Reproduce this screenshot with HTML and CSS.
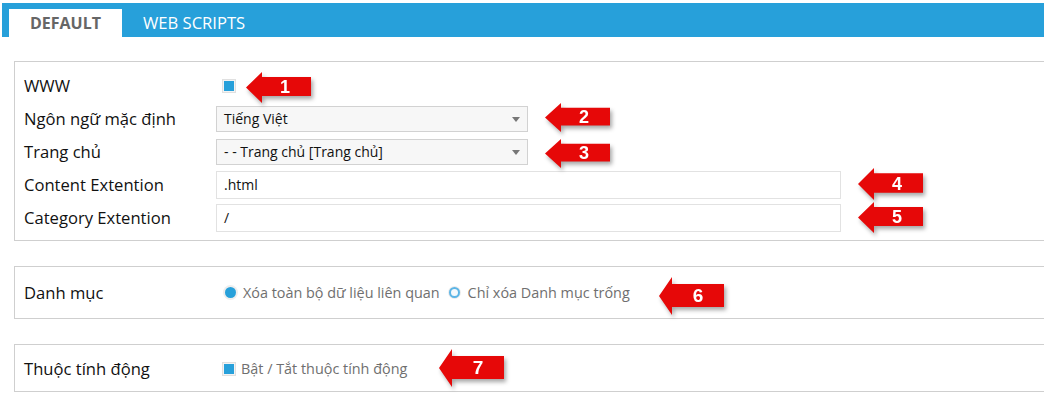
FILE: index.html
```html
<!DOCTYPE html>
<html lang="vi">
<head>
<meta charset="utf-8">
<link rel="stylesheet" href="styles.css">
</head>
<body>
<div class="page">
  <div class="tabbar">
    <div class="tab active">DEFAULT</div>
    <div class="tab">WEB SCRIPTS</div>
  </div>

  <div class="panel p1">
    <div class="row">
      <div class="label">WWW</div>
      <div class="ctrl"><span class="check"><span class="mark"></span></span></div>
    </div>
    <div class="row">
      <div class="label">Ngôn ngữ mặc định</div>
      <div class="ctrl"><div class="select">Tiếng Việt<span class="caret"></span></div></div>
    </div>
    <div class="row">
      <div class="label">Trang chủ</div>
      <div class="ctrl"><div class="select">- - Trang chủ [Trang chủ]<span class="caret"></span></div></div>
    </div>
    <div class="row">
      <div class="label">Content Extention</div>
      <div class="ctrl"><div class="input">.html</div></div>
    </div>
    <div class="row">
      <div class="label">Category Extention</div>
      <div class="ctrl"><div class="input">/</div></div>
    </div>
  </div>

  <div class="panel p2">
    <div class="row">
      <div class="label">Danh mục</div>
      <div class="ctrl opts">
        <span class="radio on"></span><span class="opt">Xóa toàn bộ dữ liệu liên quan</span>
        <span class="radio"></span><span class="opt">Chỉ xóa Danh mục trống</span>
      </div>
    </div>
  </div>

  <div class="panel p3">
    <div class="row">
      <div class="label">Thuộc tính động</div>
      <div class="ctrl opts">
        <span class="check"><span class="mark"></span></span><span class="opt">Bật / Tắt thuộc tính động</span>
      </div>
    </div>
  </div>

  <div class="arrow a1"><svg viewBox="0 0 65 31" preserveAspectRatio="none"><polygon points="0,15.5 16,0 16,5 65,5 65,24 16,24 16,31"/></svg><span>1</span></div>
  <div class="arrow a2"><svg viewBox="0 0 65 31" preserveAspectRatio="none"><polygon points="0,15.5 16,0 16,5 65,5 65,24 16,24 16,31"/></svg><span>2</span></div>
  <div class="arrow a3"><svg viewBox="0 0 65 31" preserveAspectRatio="none"><polygon points="0,15.5 16,0 16,5 65,5 65,24 16,24 16,31"/></svg><span>3</span></div>
  <div class="arrow a4"><svg viewBox="0 0 65 31" preserveAspectRatio="none"><polygon points="0,15.5 16,0 16,5 65,5 65,24 16,24 16,31"/></svg><span>4</span></div>
  <div class="arrow a5"><svg viewBox="0 0 65 31" preserveAspectRatio="none"><polygon points="0,15.5 16,0 16,5 65,5 65,24 16,24 16,31"/></svg><span>5</span></div>
  <div class="arrow a6 big"><svg viewBox="0 0 65 38" preserveAspectRatio="none"><polygon points="0,19 13,0 13,7 65,7 65,30 13,30 13,38"/></svg><span>6</span></div>
  <div class="arrow a7 big"><svg viewBox="0 0 65 38" preserveAspectRatio="none"><polygon points="0,19 13,0 13,7 65,7 65,30 13,30 13,38"/></svg><span>7</span></div>
</div>
</body>
</html>
```

FILE: styles.css
```css
html, body {
  margin: 0;
  padding: 0;
  background: #fff;
  overflow: hidden;
}
body {
  font-family: "Open Sans", "Noto Sans", sans-serif;
  color: #111;
  width: 1044px;
  height: 393px;
}
.page {
  position: relative;
  padding-top: 3px;
}
.tabbar {
  margin-left: 2px;
  height: 34px;
  background: #27a0da;
  display: flex;
  align-items: flex-end;
}
.tab {
  font-size: 16.6px;
  color: #fff;
  height: 28px;
  line-height: 28px;
  padding: 0 0 0 21px;
}
.tab.active {
  margin-left: 7px;
  width: 113px;
  padding: 0;
  background: #fff;
  color: #666;
  font-size: 16px;
  font-weight: 700;
  text-align: center;
}
.panel {
  margin-left: 14px;
  margin-right: -20px;
  border: 1px solid #cfcfcf;
  border-right: none;
}
.p1 {
  margin-top: 24px;
  padding: 7px 0 6px;
}
.p2 {
  margin-top: 25px;
  padding: 9px 0 9px;
}
.p3 {
  margin-top: 25px;
  padding: 7px 0 6px;
}
.row {
  display: flex;
  align-items: center;
  height: 33px;
}
.label {
  width: 192px;
  padding-left: 9px;
  font-size: 16.6px;
  color: #111;
}
.ctrl {
  display: flex;
  align-items: center;
}
.check {
  width: 14px;
  height: 14px;
  box-sizing: border-box;
  border: 1px solid #e0e0e0;
  background: #f3f3f3;
  display: flex;
  align-items: center;
  justify-content: center;
  margin-left: 6px;
}
.check .mark {
  width: 10px;
  height: 10px;
  background: #27a0da;
}
.select {
  position: relative;
  width: 312px;
  height: 26px;
  box-sizing: border-box;
  border: 1px solid #d2d2d2;
  background: #f7f7f7;
  font-size: 14px;
  line-height: 24px;
  padding-left: 7px;
  color: #111;
}
.caret {
  position: absolute;
  right: 7px;
  top: 10px;
  width: 0;
  height: 0;
  border-left: 4px solid transparent;
  border-right: 4px solid transparent;
  border-top: 5px solid #777;
}
.input {
  width: 625px;
  height: 28px;
  box-sizing: border-box;
  border: 1px solid #e2e2e2;
  background: #fff;
  font-size: 14px;
  line-height: 26px;
  padding-left: 7px;
  color: #111;
}
.opts {
  font-size: 14.4px;
  color: #6f6f6f;
}
.radio {
  width: 11px;
  height: 11px;
  border-radius: 50%;
  box-sizing: border-box;
  margin-left: 9px;
  margin-right: 7px;
}
.radio.on {
  background: #27a0da;
  box-shadow: 0 0 0 2px #eeeeee;
}
.radio:not(.on) {
  margin-left: 9px;
  margin-right: 8px;
  border: 2px solid #5cb5e6;
  background: #f4f9fc;
  box-shadow: 0 0 0 1px #ececec;
}
.p3 .check {
  margin-right: 5px;
}
.arrow {
  position: absolute;
  width: 65px;
  height: 31px;
  filter: drop-shadow(2px 3px 2px rgba(0,0,0,0.35));
}
.arrow svg {
  position: absolute;
  left: 0;
  top: 0;
  width: 100%;
  height: 100%;
  fill: #e60808;
}
.arrow span {
  position: absolute;
  left: 13px;
  right: 0;
  top: 0;
  bottom: 0;
  display: flex;
  align-items: center;
  justify-content: center;
  font-family: "Liberation Sans", Arial, sans-serif;
  font-weight: 700;
  font-size: 18px;
  color: #fff;
}
.arrow.big {
  height: 38px;
}
.arrow.big span {
  left: 13px;
  font-size: 19px;
}
.a1 { left: 246px; top: 72px; }
.a2 { left: 545px; top: 103px; height: 29px; }
.a3 { left: 545px; top: 139px; height: 29px; }
.a4 { left: 858px; top: 168px; height: 32px; }
.a5 { left: 858px; top: 202px; height: 31px; }
.a6 { left: 659px; top: 277px; }
.a7 { left: 439px; top: 349px; }
```
